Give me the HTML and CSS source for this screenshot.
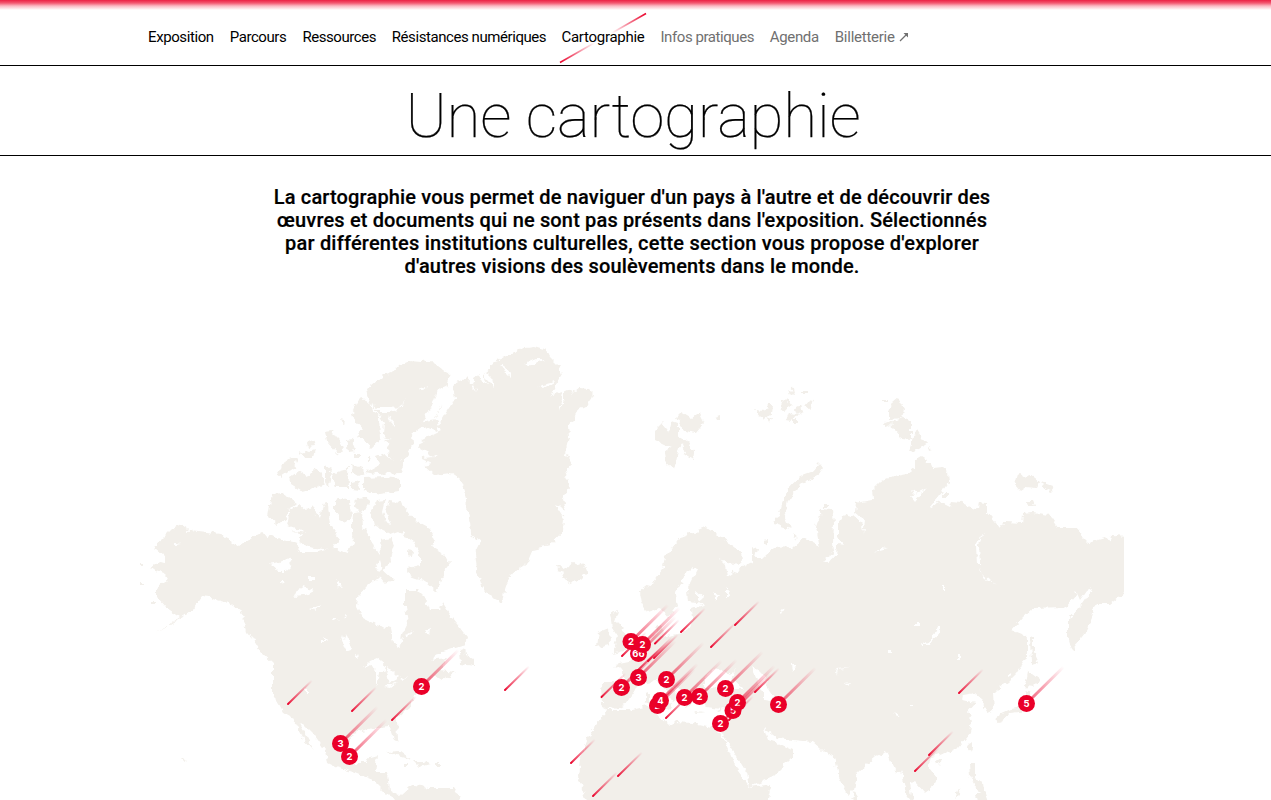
FILE: index.html
```html
<!DOCTYPE html>
<html lang="fr">
<head>
<meta charset="utf-8">
<title>Une cartographie</title>
<link rel="stylesheet" href="styles.css">
</head>
<body>
<header class="topbar">
  <nav class="nav">
    <a class="w1">Exposition</a><a class="w2">Parcours</a><a class="w3">Ressources</a><a class="w4">Résistances numériques</a><a class="w5 active">Cartographie<svg class="slash" viewBox="0 0 88 52"><defs><linearGradient id="s1" gradientUnits="userSpaceOnUse" x1="1" y1="51" x2="36" y2="31"><stop stop-color="#ea0029"/><stop offset="1" stop-color="#ea0029" stop-opacity="0"/></linearGradient><linearGradient id="s2" gradientUnits="userSpaceOnUse" x1="87" y1="1" x2="52" y2="21"><stop stop-color="#ea0029"/><stop offset="1" stop-color="#ea0029" stop-opacity="0"/></linearGradient></defs><path d="M1 50.500 36 30.500" stroke="url(#s1)"/><path d="M87 1.500 52 21.500" stroke="url(#s2)"/></svg></a><a class="w6 muted">Infos pratiques</a><a class="w7 muted">Agenda</a><a class="w8 muted">Billetterie <svg class="arrow" viewBox="0 0 10 10"><path d="M1 9 8 2"/><path class="head" d="M4.500 1H9V5.500Z"/></svg></a>
  </nav>
</header>
<h1 class="title">Une cartographie</h1>
<main>
  <p class="intro"><span>La cartographie vous permet de naviguer d'un pays à l'autre et de découvrir des</span><span>œuvres et documents qui ne sont pas présents dans l'exposition. Sélectionnés</span><span class="l3">par différentes institutions culturelles, cette section vous propose d'explorer</span><span>d'autres visions des soulèvements dans le monde.</span></p>
  <svg class="map" viewBox="140 340 984 460">
    <defs>
      <filter id="coast" color-interpolation-filters="sRGB" filterUnits="userSpaceOnUse" x="100" y="300" width="1080" height="540"><feTurbulence type="fractalNoise" baseFrequency=".17" numOctaves="2" seed="4"/><feDisplacementMap in="SourceGraphic" scale="7" xChannelSelector="R" yChannelSelector="G"/></filter>
      <linearGradient id="thin" gradientUnits="userSpaceOnUse" x1="0" y1="0" x2="24" y2="-24"><stop stop-color="#ea0029"/><stop offset=".1" stop-color="#ea0029" stop-opacity=".8"/><stop offset="1" stop-color="#ea0029" stop-opacity="0"/></linearGradient>
      <linearGradient id="thick" gradientUnits="userSpaceOnUse" x1="0" y1="0" x2="37" y2="-37"><stop stop-color="#ea0029" stop-opacity=".65"/><stop offset="1" stop-color="#ea0029" stop-opacity="0"/></linearGradient>
    </defs>
    <g filter="url(#coast)">
      <g class="land">
        <!-- North America -->
        <path d="M153 546 160 541 165 536 172 529 181 524 190 530 207 532 220 534 230 539 240 546 255 536 263 532 267 537 273 535 283 540 297 543 300 552 318 552 333 548 348 553 353 543 352 532 353 513 362 512 363 527 370 537 374 547 380 555 383 545 389 547 391 560 385 571 377 578 367 587 358 597 357 607 363 618 373 623 390 628 393 643 400 647 402 635 408 623 405 607 405 590 418 590 425 597 430 610 440 610 442 602 452 618 467 637 465 645 443 652 430 660 447 658 440 670 455 672 442 680 434 675 427 685 413 697 410 707 397 718 398 740 395 742 390 727 380 728 373 728 353 733 347 747 348 763 367 763 370 757 377 755 375 773 387 773 389 790 400 796 412 785 423 786 427 788 453 788 462 802 400 802 388 795 373 780 353 772 337 767 327 762 325 750 313 733 303 723 299 724 314 750 303 738 292 717 283 712 273 695 273 663 262 653 248 630 240 610 228 603 210 598 202 597 193 610 183 617 157 633 180 617 167 608 157 597 157 588 168 580 164 573 150 568 158 562 165 563 165 557Z"/>
        <path d="M460 650 465 648 466 655 474 660 474 666 461 664ZM266 652 272 655 277 662 270 659ZM242 617 247 622 251 638 246 632ZM140 563h3v3h-3zM140 582h4v2h-4zM151 602h5v2h-5z"/>
        <path d="M386 752 400 751 412 760 401 757ZM414 761 424 761 431 764 420 767ZM404 764h5v2h-5zM435 764h5v2h-5z"/>
        <!-- Arctic archipelago -->
        <path d="M272 494 282 493 297 503 290 509 286 518 277 525 268 517ZM290 510 300 504 307 510 312 506 320 518 324 502 328 505 330 525 339 538 331 550 308 547 299 541 303 535 291 530 306 532 287 525Z"/>
        <path d="M335 502 343 498 350 500 352 515 347 522 340 519 335 512ZM355 498 368 497 369 504 361 512 354 508ZM352 520 359 518 363 540 353 541Z"/>
        <path d="M371 512 376 501 385 500 382 512 385 522 392 524 385 512 389 501 401 502 409 513 417 522 430 529 435 540 431 547 443 554 450 563 445 570 441 580 437 592 425 581 410 576 408 569 420 566 420 554 413 541 398 531 390 534 374 526Z"/>
        <path d="M380 540 391 538 394 545 389 560 381 557ZM407 549 413 550 412 557 407 556ZM381 568 394 580 384 583 380 578Z"/>
        <path d="M277 474 286 460 297 457 294 468 281 477ZM290 477 299 471 308 477 315 466 321 473 326 484 310 490 303 492 292 485ZM303 453 315 449 313 458 305 458ZM306 443 313 440 315 446 307 447ZM341 419 345 420 344 425ZM299 451 302 453 300 455ZM335 452 338 454 336 455Z"/>
        <path d="M325 432 332 431 336 438 343 445 345 454 337 452 327 441ZM332 474 340 471 348 469 349 487 336 487ZM346 440 353 439 356 451 348 452ZM352 454 361 454 361 458 354 458ZM351 464 362 468 365 473 359 476 352 472ZM352 482 359 480 360 491 352 490ZM326 464 331 472 329 487 326 481ZM367 456 371 456 370 461 367 461Z"/>
        <path d="M364 478 384 477 400 479 400 491 380 494 364 490ZM366 472 379 465 376 456 384 453 391 459 404 461 404 466 400 473 376 474Z"/>
        <path d="M361 398 369 402 372 411 379 416 380 440 371 448 365 441 358 436 363 430 354 420 352 414 356 403ZM366 390 383 376 392 373 399 365 409 361 420 362 430 361 439 366 451 375 447 386 437 390 434 400 427 414 420 428 412 434 413 443 408 454 404 460 395 460 389 456 387 443 383 435 384 422 376 411 369 402Z"/>
        <!-- Greenland -->
        <path d="M418 423 437 432 441 423 434 418 440 407 451 398 449 392 456 382 466 378 471 384 477 375 487 385 484 372 490 370 490 365 501 358 511 355 519 349 534 347 547 351 550 357 558 365 562 374 557 382 554 395 567 389 575 392 580 388 588 389 593 394 589 405 577 411 574 420 568 425 569 437 565 453 572 464 565 475 570 487 563 499 566 510 555 505 564 519 563 531 550 545 533 549 527 563 512 574 506 585 503 603 494 599 482 587 477 569 475 554 481 542 471 534 470 522 468 513 465 493 460 479 451 473 434 475 424 466 432 464 420 458 436 457 419 448 423 440 441 431 437 420Z"/>
        <!-- Atlantic islands and Svalbard -->
        <path d="M557 565 563 568 568 566 574 563 580 566 583 562 587 572 580 579 571 583 562 578 565 573 558 571Z"/>
        <path d="M610 613 618 611 615 620 622 627 625 637 631 646 628 650 612 654 617 648 614 643 618 636 612 627ZM599 632 609 628 610 644 597 647Z"/>
        <path d="M656 429 662 423 669 432 672 421 678 423 678 435 687 440 694 452 693 460 686 456 682 444 679 448 674 469 666 462 665 452 672 447 664 444 656 440ZM676 418 682 412 692 418 699 413 704 423 696 433 684 431ZM715 418 721 416 721 420 716 420Z"/>
        <path d="M755 410 764 411 768 405 772 405 771 414 763 421ZM779 407 788 398 793 405 784 411ZM785 420 790 413 797 415 792 421ZM794 409 802 405 804 412 796 415ZM804 405 808 400 813 401 809 409ZM788 394 793 387 795 396ZM803 390h5v3h-5zM767 417 772 419 770 423ZM780 400 784 400 783 404ZM793 420h4v3h-4z"/>
        <!-- Eurasia -->
        <path d="M640 592 653 582 662 570 665 557 672 550 680 537 693 532 705 527 713 532 727 542 742 553 743 562 737 565 718 558 725 565 727 577 733 573 742 567 752 562 752 547 757 550 755 558 762 558 773 548 793 547 798 543 805 538 815 543 820 548 816 527 822 509 832 510 834 523 833 542 834 552 822 560 829 563 836 555 837 545 844 546 838 539 838 523 845 513 853 515 862 523 863 535 865 520 855 512 856 503 873 500 872 490 880 482 897 475 908 473 915 468 915 460 922 456 927 459 925 463 930 463 932 468 942 467 948 472 949 482 940 495 930 507 940 502 950 507 952 502 962 503 977 510 978 502 987 503 987 512 1000 528 1005 522 1022 523 1023 513 1033 512 1050 515 1058 527 1077 527 1082 537 1087 542 1105 537 1110 543 1112 535 1130 536 1130 590 1118 598 1110 604 1098 604 1092 612 1088 629 1072 650 1068 636 1068 620 1082 605 1091 592 1092 588 1087 590 1080 600 1077 593 1065 607 1033 608 1023 617 1012 630 1022 634 1027 640 1027 657 1017 673 1007 683 993 693 994 710 987 713 983 700 975 693 963 695 962 700 975 703 967 712 972 720 970 733 958 748 940 755 930 757 928 765 937 777 935 785 925 793 915 782 910 783 913 802 906 793 902 773 895 770 887 752 875 757 857 773 853 790 848 795 838 777 833 753 827 755 820 748 813 742 793 740 777 738 764 728 768 740 778 743 793 750 793 757 773 777 750 787 747 773 722 733 727 723 727 710 707 707 700 700 703 693 698 692 693 700 688 707 682 693 670 683 678 698 673 702 663 687 657 680 640 685 635 690 625 705 610 709 602 705 601 682 623 682 623 670 615 665 630 662 635 657 647 648 653 637 657 627 663 627 662 637 683 633 690 627 693 618 692 609 706 604 688 602 687 590 697 570 693 567 687 573 675 593 677 607 668 618 660 608 647 612 642 603Z"/>
        <path d="M779 516 782 504 788 489 800 476 811 472 819 463 823 468 819 474 803 483 795 491 787 502 784 515 790 529 777 525 773 520ZM793 532 799 537 796 539ZM763 541 768 540 768 544 763 545ZM824 504 829 504 829 508 824 508ZM889 411 892 403 898 398 904 409 902 418 889 419ZM892 421 903 418 911 421 911 439 902 438 893 428ZM909 451 913 438 917 430 926 444 920 448ZM884 423 892 420 892 425 886 427ZM1015 485 1018 474 1024 477 1030 475 1039 482 1036 488 1026 487 1020 491ZM1041 482 1055 487 1052 491 1046 489ZM1026 501 1033 501 1035 506 1027 506ZM882 400h5v2h-5zM929 446 933 449 930 450ZM943 493h5v4h-5z"/>
        <!-- Africa and southern islands -->
        <path d="M587 802 578 777 580 760 587 740 593 730 602 717 608 710 627 710 653 704 655 713 670 727 675 722 693 723 717 728 722 735 737 770 750 787 772 784 767 802ZM645 692 650 691 650 703 645 701ZM660 705 673 703 669 709ZM694 711 704 712 697 713ZM717 711 722 709 720 713Z"/>
        <path d="M1030 635 1034 636 1034 652 1039 663 1031 665ZM1025 686 1028 671 1040 680 1033 687ZM1026 690 1031 693 1030 706 1020 713 1010 714 1004 718 1001 724 996 720 999 714 1010 709 1018 708 1023 700ZM935 761 942 759 941 764 936 765ZM968 746 972 743 972 748 970 752ZM969 764 975 764 975 779 983 782 984 793 977 790 970 776ZM854 791 858 797 856 802 852 798ZM976 795 984 791 988 802 978 802ZM960 787 959 795 955 798ZM181 758 186 761 183 763Z"/>
      </g>
      <g class="water">
        <path d="M270 564 280 562 289 558 291 564 287 571 278 571ZM295 597 298 590 304 586 314 590 303 596ZM310 609 321 605 314 611ZM340 635 344 640 346 634 352 649 346 651ZM364 667 370 661 377 658 386 665 385 671 379 673 376 686 376 671 369 666ZM388 667 396 675 401 676 390 682 386 674ZM385 687 398 681 390 688ZM400 681 410 677 402 682ZM355 654 359 656 356 659ZM323 638 327 642 323 642ZM335 580 342 586 338 588ZM309 577h7v3h-7zM405 635 413 630 408 637ZM426 630 431 628 430 635ZM176 543 182 544 176 545ZM188 528 194 531 187 532ZM281 579 285 582 281 583ZM333 618 338 618 333 621ZM343 617 347 614 346 618ZM304 689h4v3h-4zM374 568 379 560 382 570Z"/>
        <path d="M443 403 434 419 440 423 447 411 455 399 453 386 461 375 453 383ZM370 403 380 412 392 412 403 404 405 397 401 407 389 408 378 408ZM387 414 395 424 395 427 390 421ZM376 446 384 437 391 439 384 440 378 450ZM418 390 429 386 423 391Z"/>
        <path d="M705 688 705 677 716 668 721 670 730 675 735 670 732 678 744 689 726 689ZM752 666 760 671 767 678 765 684 770 691 774 697 770 701 764 700 764 691 758 685 756 676ZM792 664 798 664 793 672ZM697 592 702 596 701 602 697 598ZM712 591 719 596 716 600ZM726 588 730 593 726 599ZM835 668 851 667 838 669 837 675ZM921 645 931 641 938 625 940 632 930 645ZM844 683 850 682 847 686ZM1008 673 1013 674 1008 677ZM911 496 923 490 928 487 921 494 915 501ZM984 532 976 545 977 565 980 565 979 545ZM978 570 996 585 985 578ZM874 553 881 547 887 548 880 550ZM911 490 916 494 914 499ZM888 650h4v3h-4zM958 656h3v4h-3zM915 623h5v3h-5zM910 704h4v2h-4zM894 713 901 716 898 717ZM780 608 784 609 782 613ZM942 584h2v5h-2z"/>
        <path d="M482 368 492 378 494 388 489 383ZM470 378 477 392 473 388ZM501 365 508 370 511 378 506 373ZM524 364 536 359 546 359 533 366ZM534 391 542 384 555 381 552 385 540 386ZM564 383 564 400 559 411 562 398ZM560 382 550 396 556 391ZM570 383 573 395 571 391Z"/>
      </g>
    </g>
    <g id="pins" class="pins"></g>
  </svg>
</main>
<script src="pins.js"></script>
</body>
</html>
```
FILE: styles.css
```css
* { box-sizing: border-box; }
html { overflow: hidden; }
body { margin: 0; height: 800px; overflow: hidden; background: #fff; color: #000; font-family: Roboto, "Liberation Sans", sans-serif; }
.topbar { height: 66px; border-bottom: 1px solid #000; background: linear-gradient(#ec2044, #f35871 3px, #fbb9c4 6px, #fff 10px); }
.nav { display: flex; gap: 16px; padding: 28px 0 0 148px; font-size: 15px; line-height: 18px; white-space: nowrap; }
.nav a { position: relative; display: block; }
.w1 { width: 65.8px; letter-spacing: -.4px; }
.w2 { width: 56.7px; letter-spacing: -.45px; }
.w3 { width: 73.3px; letter-spacing: -.45px; }
.w4 { width: 153.7px; letter-spacing: -.43px; }
.w5 { width: 83px; letter-spacing: -.28px; }
.w6 { width: 93.3px; letter-spacing: -.43px; }
.w7 { width: 49px; letter-spacing: -.35px; }
.w8 { width: 80px; letter-spacing: -.25px; }
.muted { color: #707070; }
.slash { position: absolute; left: -2px; top: -16px; width: 88px; height: 52px; fill: none; stroke-width: 1.5; }
.arrow { width: 10px; height: 10px; margin-left: 1px; fill: none; stroke: #707070; stroke-width: 1.3; }
.arrow .head { fill: #707070; stroke: none; }
.title { margin: 0; height: 90px; border-bottom: 1px solid #000; padding-right: 5px; text-align: center; font-weight: 100; font-size: 62px; line-height: 100px; letter-spacing: -.25px; -webkit-text-stroke: .25px #000; }
.intro { margin: 30px 0 0; padding-right: 7px; text-align: center; font-weight: 500; font-size: 20px; line-height: 23px; letter-spacing: .15px; white-space: nowrap; -webkit-text-stroke: .2px #000; }
.intro span { display: block; }
.intro .l3 { letter-spacing: .2px; }
.map { display: block; width: 984px; height: 460px; margin: 62px 0 0 140px; }
.land { fill: #f2efea; }
.water { fill: #fff; }
.thin { stroke: url(#thin); stroke-width: 1.9; stroke-linecap: round; }
.thick { stroke: url(#thick); stroke-width: 3; }
.disc { fill: #ea0029; }
.count { fill: #fff; font-family: Inter, sans-serif; font-weight: 700; font-size: 9.5px; text-anchor: middle; }
```
FILE: pins.js
```js
const tips = [[288,704],[352,711],[392,720],[505,690],[571,763],[593,796],[618,776],[601.5,697],[622,656],[655,643.5],[681,632],[711,647],[735,625],[648,661],[654,658],[635,673],[666,718],[755,692],[729,720],[959,693],[929,755],[915,771]];
const groups = [[340.5,743.5,3],[349.5,756.5,2],[421.5,686.5,2],[1026.5,703.5,5],[638.5,653.5,66],[631,641.5,2],[642.5,644.5,2],[638.5,677.5,3],[621.5,687.5,2],[666.5,679.5,2],[657.5,705.5,2],[660.5,700.5,4],[684.5,697.5,2],[699.5,696.5,2],[725.5,688.5,2],[733,710.5,5],[737.5,702.5,2],[720.5,723.5,2],[778.5,704.5,2]];
const thin = tips.map(([x, y]) => `<path class="thin" transform="translate(${x} ${y})" d="M0 0 24-23.500"/>`).join('');
const discs = groups.map(([x, y, n]) => `<g transform="translate(${x} ${y})"><path class="thick" d="M4-4 37-36.500"/><circle class="disc" r="8.500"/><text class="count" y="3.500">${n}</text></g>`).join('');
document.getElementById('pins').innerHTML = thin + discs;
```
